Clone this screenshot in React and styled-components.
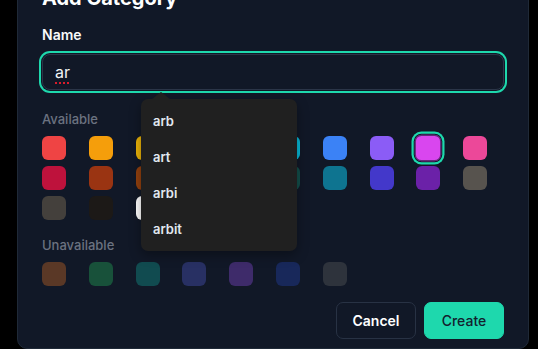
import React from "react";
import styled, { createGlobalStyle } from "styled-components";

const Global = createGlobalStyle`
  html, body { margin: 0; padding: 0; background: #000; overflow: hidden; }
  body { font-family: Inter, "Noto Sans", sans-serif; -webkit-font-smoothing: antialiased; }
`;

const Page = styled.div`
  display: flex;
  padding-left: 17px;
  height: 349px;
  overflow: hidden;
`;

const Dialog = styled.div`
  box-sizing: border-box;
  width: 512px;
  margin-top: -41px;
  padding: 24px 24px 40px;
  background: #111827;
  border: 1px solid #1f2937;
  border-radius: 10px;
  display: flex;
  flex-direction: column;
`;

const Title = styled.h2`
  margin: 0;
  font-size: 20px;
  line-height: 28px;
  font-weight: 700;
  color: #fff;
`;

const Label = styled.label`
  margin-top: 13px;
  font-size: 14px;
  line-height: 20px;
  font-weight: 600;
  color: #f9fafb;
`;

const Field = styled.div`
  position: relative;
  margin-top: 9px;
`;

const Input = styled.div`
  box-sizing: border-box;
  height: 36px;
  padding: 7px 12px;
  border: 1px solid #2b3548;
  border-radius: 8px;
  background: #111827;
  box-shadow: 0 0 0 1px #111827, 0 0 0 3px #1ed8ad;
  font-size: 16px;
  line-height: 20px;
  color: #f3f4f6;
`;

const Typed = styled.span`
  text-decoration: underline dotted #d91c2c;
  text-decoration-thickness: 1.5px;
  text-underline-offset: 4px;
`;

const Menu = styled.ul`
  position: absolute;
  left: 99px;
  top: 45px;
  width: 156px;
  margin: 0;
  padding: 4px 0;
  list-style: none;
  background: #202020;
  border-radius: 7px;
  box-shadow: 0 4px 12px rgba(0, 0, 0, 0.35);
  z-index: 5;

  &::before {
    content: "";
    position: absolute;
    left: 11px;
    top: -7px;
    border-left: 9px solid transparent;
    border-right: 9px solid transparent;
    border-bottom: 7px solid #202020;
  }
`;

const MenuItem = styled.li`
  height: 36px;
  display: flex;
  align-items: center;
  padding: 0 12px;
  font-size: 13px;
  font-weight: 600;
  color: #e2e8f0;
`;

const SectionLabel = styled.div`
  margin-top: ${(p) => p.$mt}px;
  font-size: 13px;
  line-height: 18px;
  font-weight: 500;
  color: #6b7280;
`;

const Grid = styled.div`
  margin-top: 8px;
  display: grid;
  grid-template-columns: repeat(10, 24px);
  column-gap: 22.8px;
  row-gap: 6px;
`;

const Swatch = styled.div`
  width: 24px;
  height: 24px;
  border-radius: 6px;
  background: ${(p) => p.$c};
  ${(p) =>
    p.$selected &&
    `transform: scale(1.1); box-shadow: inset 0 0 0 1px rgba(17,24,39,0.6), 0 0 0 1px #111827, 0 0 0 3px #1ed8ad;`}
`;

const Actions = styled.div`
  margin-top: 16px;
  display: flex;
  justify-content: flex-end;
  gap: 8px;
`;

const Button = styled.button`
  box-sizing: border-box;
  height: 37px;
  width: 80px;
  border-radius: 7px;
  font-family: inherit;
  font-size: 14px;
  cursor: pointer;
  border: 1px solid ${(p) => (p.$primary ? "#1ed8ad" : "#283244")};
  background: ${(p) => (p.$primary ? "#1ed8ad" : "transparent")};
  color: ${(p) => (p.$primary ? "#13202e" : "#fff")};
  font-weight: ${(p) => (p.$primary ? 500 : 600)};
`;

const available = [
  "#ef4444", "#f59e0b", "#eab308", "#84cc16", "#22c55e", "#06b6d4", "#3b82f6", "#8b5cf6", "#d946ef", "#ec4899",
  "#be123c", "#9a3412", "#92400e", "#3f6212", "#166534", "#134e4a", "#0e7490", "#4338ca", "#6b21a8", "#57534e",
  "#44403c", "#1c1917", "#ffffff", "#94a3b8", "#64748b",
];

const unavailable = ["#5a3826", "#18513a", "#114b50", "#283063", "#3e2b6a", "#18285a", "#2e333c"];

export default function App() {
  return (
    <>
      <Global />
      <Page>
        <Dialog>
          <Title>Add Category</Title>
          <Label>Name</Label>
          <Field>
            <Input>
              <Typed>ar</Typed>
            </Input>
            <Menu>
              {["arb", "art", "arbi", "arbit"].map((s) => (
                <MenuItem key={s}>{s}</MenuItem>
              ))}
            </Menu>
          </Field>
          <SectionLabel $mt={20}>Available</SectionLabel>
          <Grid>
            {available.map((c, i) => (
              <Swatch key={i} $c={c} $selected={i === 8} />
            ))}
          </Grid>
          <SectionLabel $mt={16}>Unavailable</SectionLabel>
          <Grid>
            {unavailable.map((c, i) => (
              <Swatch key={i} $c={c} />
            ))}
          </Grid>
          <Actions>
            <Button>Cancel</Button>
            <Button $primary>Create</Button>
          </Actions>
        </Dialog>
      </Page>
    </>
  );
}
